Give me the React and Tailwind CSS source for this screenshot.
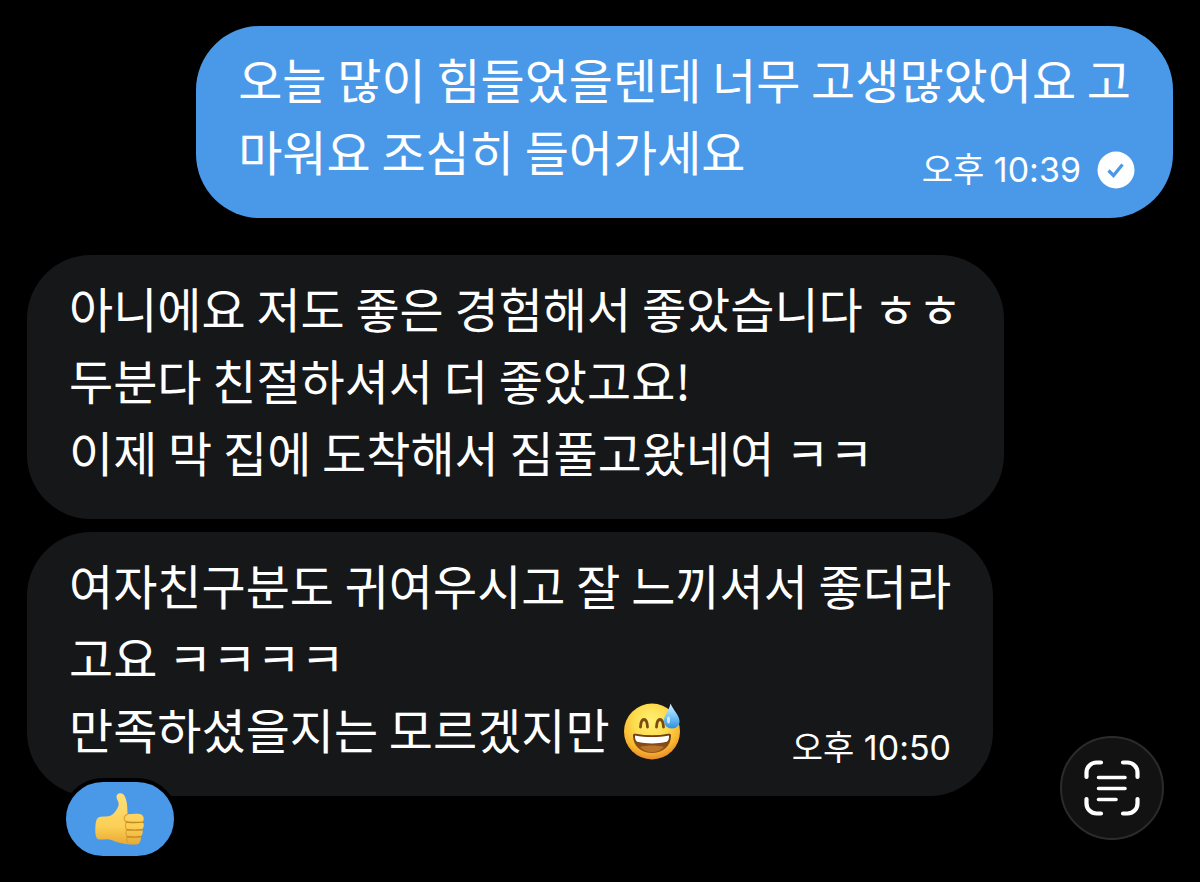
import React from 'react';

const messages = [
  {
    id: 1,
    mine: true,
    lines: ['오늘 많이 힘들었을텐데 너무 고생많았어요 고', '마워요 조심히 들어가세요'],
    time: '오후 10:39'
  },
  {
    id: 2,
    lines: ['아니에요 저도 좋은 경험해서 좋았습니다 ㅎㅎ', '두분다 친절하셔서 더 좋았고요!', '이제 막 집에 도착해서 짐풀고왔네여 ㅋㅋ']
  },
  {
    id: 3,
    lines: ['여자친구분도 귀여우시고 잘 느끼셔서 좋더라', '고요 ㅋㅋㅋㅋ', '만족하셨을지는 모르겠지만 '],
    emoji: true,
    time: '오후 10:50',
    reaction: true
  }
];

const SweatSmile = () => (
  <svg viewBox="0 0 60 60" role="img" aria-label="😅" className="inline-block size-15 ml-0.5 -mt-3 align-middle">
    <defs>
      <radialGradient id="face" cx="0.48" cy="0.32" r="0.68">
        <stop offset="0" stopColor="#fff176" />
        <stop offset="0.45" stopColor="#fddc4e" />
        <stop offset="0.8" stopColor="#f9b52f" />
        <stop offset="1" stopColor="#e8892b" />
      </radialGradient>
      <linearGradient id="mouth" x1="0" y1="0" x2="0" y2="1">
        <stop offset="0" stopColor="#6b3a10" />
        <stop offset="1" stopColor="#9a5a18" />
      </linearGradient>
      <linearGradient id="drop" x1="0" y1="0" x2="0" y2="1">
        <stop offset="0" stopColor="#d8f1ff" />
        <stop offset="0.5" stopColor="#7cc8f8" />
        <stop offset="1" stopColor="#2f8fe0" />
      </linearGradient>
    </defs>
    <circle cx="30" cy="31.5" r="28" fill="url(#face)" />
    <path d="M18.500 27c.3-5 1.800-7.500 3.500-7.500s3.200 2.500 3.500 7.500" fill="none" stroke="#7a4a12" strokeWidth="2.800" strokeLinecap="round" />
    <path d="M34.500 27c.3-5 1.800-7.500 3.500-7.500s3.200 2.500 3.500 7.500" fill="none" stroke="#7a4a12" strokeWidth="2.800" strokeLinecap="round" />
    <path d="M11 35.500c0-1.500 1-2 2.500-1.700 11 2 22 2 33 0 1.500-.3 2.500.2 2.500 1.700C49 46 41 53 30 53S11 46 11 35.500z" fill="url(#mouth)" />
    <path d="M13 35.500c11 2 23 2 34 0 .3 3-.7 5.500-2.300 6.300-9 2.100-20.400 2.100-29.400 0C13.700 41 12.700 38.500 13 35.500z" fill="#fff" />
    <path d="M18 47c7-2 17-2 24 0-3 3-7 5-12 5s-9-2-12-5z" fill="#b9742a" />
    <path d="M48.500 3.500c-1 6-6.500 12-6.500 17 0 5 3.500 8 8 8s8-3.500 7.500-8c-.6-5.500-6-10-9-17z" fill="url(#drop)" />
    <ellipse cx="46.500" cy="20" rx="1.500" ry="3.500" fill="#e9f8ff" opacity="0.8" />
  </svg>
);

const ThumbsUp = () => (
  <svg viewBox="0 0 52 54" aria-hidden="true" className="h-[54px] w-[52px]">
    <defs>
      <linearGradient id="hand" x1="0" y1="0" x2="0" y2="1">
        <stop offset="0" stopColor="#ffe07c" />
        <stop offset="0.65" stopColor="#fccf55" />
        <stop offset="1" stopColor="#e8a934" />
      </linearGradient>
    </defs>
    <path
      d="M26.300 1.200c3.500 0 5.200 3.300 6.300 8.500.8 4.300.8 8.300.9 12.600 4-.4 8-.7 12-.4 3 .3 4.500 2.600 4.200 5.300-.1 1-.5 2-1 2.700 1 1.200 1.200 2.600 1 4-.2 1.600-.8 2.700-1.700 3.500.7 1 .8 2.200.6 3.500-.2 1.600-1 2.700-2 3.400.4 1 .4 2 .2 3.100-.6 3.600-2.600 5.300-6 5.200-6-.1-12-.6-17.500-2.300-4-1.300-6.500-3.200-11-3-3 .1-6 .7-8.800-.3C1.500 45 1.200 41 1.300 37c.1-4.500.5-8.500 2-10.500 1.700-2 5-2 8.500-2 4-.1 6.500-1.500 8.700-4 2.500-2.800 4-5.500 4.200-8.200.2-2.500-1.700-4.300-2.200-6.800-.4-2.500 1.300-4.300 3.800-4.300z"
      fill="url(#hand)"
    />
    <path d="M33.500 22.300c-1.800.7-3.300 2-3.300 4 0 2 1 3.200 2.500 3.700-1.600 1.300-1.700 6 .2 7.700-1.400 1.500-1.200 5.500.5 7-1 1.500-.9 4 .3 5.800" fill="none" stroke="#dfa235" strokeWidth="1.200" strokeLinecap="round" />
    <path d="M32.700 30c5.300.7 10.600.7 16 .1M33 37.700c5 .6 10 .6 15 0M33.500 44.700c4.300.6 8.600.6 12.700 0" fill="none" stroke="#c58820" strokeWidth="1.400" strokeLinecap="round" />
  </svg>
);

const SentIcon = () => (
  <svg viewBox="0 0 38 38" role="img" aria-label="✓" className="size-[38px]">
    <circle cx="19" cy="19" r="18.5" fill="#fff" />
    <path d="M11.500 19.500l5 5L25.500 13.500" fill="none" stroke="#4a99e9" strokeWidth="3.200" />
  </svg>
);

const ScanIcon = () => (
  <svg viewBox="0 0 56 56" fill="none" stroke="#fff" strokeLinecap="round" aria-hidden="true" className="size-14">
    <path d="M2.500 17v-4.500a10 10 0 0 1 10-10H17M39 2.500h4.500a10 10 0 0 1 10 10V17M53.500 39v4.500a10 10 0 0 1-10 10H39M17 53.500h-4.500a10 10 0 0 1-10-10V39" strokeWidth="4.200" />
    <path d="M14.500 17.500h26.500M14.500 28.500h26.500M14.500 39.500h17.500" strokeWidth="3.600" />
  </svg>
);

const Message = ({ message }) => {
  const { mine, lines, emoji, time, reaction } = message;

  return (
    <li className={`flex flex-col ${mine ? 'items-end mb-6' : 'items-start'}`}>
      <div className={`grid rounded-[64px] px-[42px] pt-4 pb-8 ${mine ? 'bg-[#4a99e9]' : 'bg-[#161719]'}`}>
        <p className="col-start-1 row-start-1 text-5xl leading-[72px]">
          {lines.map((line, i) => (
            <span key={i} className="block">
              {line}
              {emoji && i === lines.length - 1 && <SweatSmile />}
            </span>
          ))}
        </p>
        {time && (
          <div className={`col-start-1 row-start-1 self-end justify-self-end flex items-center gap-4 -mb-1 font-['Inter','Noto_Sans_CJK_KR',sans-serif] ${mine ? '-mr-1' : ''}`}>
            <time className="text-[34px] leading-10">{time}</time>
            {mine && <SentIcon />}
          </div>
        )}
      </div>
      {reaction && (
        <button aria-label="👍" className="-mt-[18px] ml-[35px] h-[82px] rounded-full border-4 border-black bg-[#4a99e9] px-7 flex items-center">
          <ThumbsUp />
        </button>
      )}
    </li>
  );
};

const App = () => {
  return (
    <main className="min-h-screen bg-black text-white pt-[26px] pb-5 px-[27px] font-['Noto_Sans_CJK_KR',sans-serif]">
      <ul className="flex flex-col gap-[13px]">
        {messages.map(message => (
          <Message key={message.id} message={message} />
        ))}
      </ul>
      <button
        aria-label="텍스트 스캔"
        className="fixed right-9 bottom-[42px] size-[104px] rounded-full border-2 border-[#2b2b2c] bg-[#121212] flex items-center justify-center"
      >
        <ScanIcon />
      </button>
    </main>
  );
};

export default App;
